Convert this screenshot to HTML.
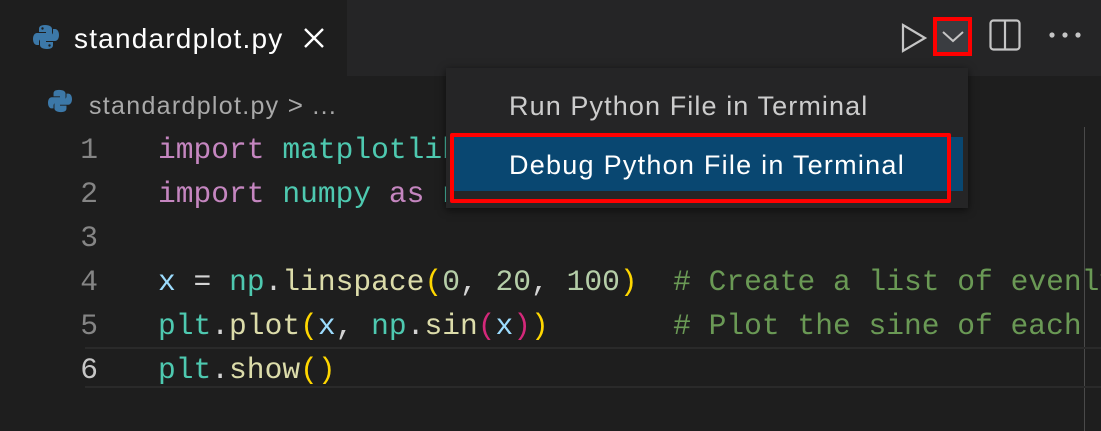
<!DOCTYPE html>
<html><head><style>
*{margin:0;padding:0;box-sizing:border-box}
body{width:1101px;height:431px;background:#1e1e1e;overflow:hidden;position:relative;font-family:"Liberation Sans",sans-serif}
.abs{position:absolute}
.code{font-family:"Liberation Mono",monospace;font-size:29.6px;white-space:pre;line-height:44px}
.ln{color:#858585;text-align:right;width:38px;left:60px}
.k{color:#c586c0}.v{color:#9cdcfe}.c{color:#4ec9b0}.f{color:#dcdcaa}.n{color:#b5cea8}.y{color:#ffd700}.p{color:#da70d6}.m{color:#6a9955}.w{color:#d4d4d4}
</style></head><body>
<div class="abs" style="left:347px;top:0;width:754px;height:76px;background:#252526"></div>
<div class="abs" style="left:0;top:0;width:347px;height:76px;background:#1e1e1e"></div>
<svg class="abs" style="left:33px;top:24px" width="26" height="26" viewBox="0 0 26 26"><path d="M12 1c-5 0-6 2-6 4v3h7v1H4c-2 0-4 2-4 6s2 6 4 6h2v-3c0-2 2-4 4-4h6c2 0 3-1 3-3V5c0-2-2-4-7-4z" fill="#3c78a8"/><path d="M14 25c5 0 6-2 6-4v-3h-7v-1h9c2 0 4-2 4-6s-2-6-4-6h-2v3c0 2-2 4-4 4h-6c-2 0-3 1-3 3v6c0 2 2 4 7 4z" fill="#3c78a8"/><circle cx="9.5" cy="4.5" r="1.2" fill="#1e1e1e"/><circle cx="16.5" cy="21.5" r="1.2" fill="#1e1e1e"/></svg>
<div class="abs" style="left:74px;top:23px;font-size:28px;letter-spacing:1.2px;color:#fff">standardplot.py</div>
<svg class="abs" style="left:303px;top:27px" width="22" height="22"><path d="M2 2L20 20M20 2L2 20" stroke="#fff" stroke-width="2.4"/></svg>
<svg class="abs" style="left:900px;top:22px" width="28" height="32"><path d="M3 3L25 16L3 29Z" fill="none" stroke="#c5c5c5" stroke-width="2.2"/></svg>
<div class="abs" style="left:933px;top:17px;width:39px;height:39px;background:#3a3d41;border:4px solid #f00"></div>
<svg class="abs" style="left:941px;top:28px" width="24" height="16"><path d="M2 4L12 13L22 4" fill="none" stroke="#c5c5c5" stroke-width="2"/></svg>
<svg class="abs" style="left:989px;top:19px" width="32" height="32"><rect x="1.5" y="1.5" width="29" height="29" rx="3" fill="none" stroke="#c5c5c5" stroke-width="2.2"/><path d="M16 2V30" stroke="#c5c5c5" stroke-width="2.2"/></svg>
<svg class="abs" style="left:1047px;top:30px" width="36" height="10"><circle cx="5" cy="5" r="2.6" fill="#c5c5c5"/><circle cx="18" cy="5" r="2.6" fill="#c5c5c5"/><circle cx="31" cy="5" r="2.6" fill="#c5c5c5"/></svg>
<svg class="abs" style="left:48px;top:89px" width="24" height="24" viewBox="0 0 26 26"><path d="M12 1c-5 0-6 2-6 4v3h7v1H4c-2 0-4 2-4 6s2 6 4 6h2v-3c0-2 2-4 4-4h6c2 0 3-1 3-3V5c0-2-2-4-7-4z" fill="#3c78a8"/><path d="M14 25c5 0 6-2 6-4v-3h-7v-1h9c2 0 4-2 4-6s-2-6-4-6h-2v3c0 2-2 4-4 4h-6c-2 0-3 1-3 3v6c0 2 2 4 7 4z" fill="#3c78a8"/></svg>
<div class="abs" style="left:89px;top:90px;font-size:25px;letter-spacing:1.3px;color:#a9a9a9;white-space:pre">standardplot.py <span style="font-size:26px">&gt;</span> ...</div>
<div class="abs" style="left:1084px;top:127px;width:1px;height:304px;background:#4a4a4a"></div>
<div class="abs" style="left:85px;top:347px;width:1016px;height:41px;border-top:2px solid #2a2a2a;border-bottom:2px solid #2a2a2a"></div>
<div class="abs code ln" style="top:128px">1
2
3
4
5
<span style="color:#c6c6c6">6</span></div>
<div class="abs code" style="left:158px;top:128px"><span class="k">import</span> <span class="c">matplotlib</span>
<span class="k">import</span> <span class="c">numpy</span> <span class="k">as</span> <span class="c">np</span>

<span class="v">x</span> <span class="w">=</span> <span class="c">np</span><span class="w">.</span><span class="f">linspace</span><span class="y">(</span><span class="n">0</span><span class="w">, </span><span class="n">20</span><span class="w">, </span><span class="n">100</span><span class="y">)</span>  <span class="m"># Create a list of evenly</span>
<span class="c">plt</span><span class="w">.</span><span class="f">plot</span><span class="y">(</span><span class="v">x</span><span class="w">, </span><span class="c">np</span><span class="w">.</span><span class="f">sin</span><span style="color:#d4287a">(</span><span class="v">x</span><span style="color:#d4287a">)</span><span class="y">)</span>       <span class="m"># Plot the sine of each</span>
<span class="c">plt</span><span class="w">.</span><span class="f">show</span><span class="y">()</span></div>
<div class="abs" style="left:446px;top:68px;width:522px;height:140px;background:#252526;box-shadow:0 2px 8px rgba(0,0,0,.6)"></div>
<div class="abs" style="left:509px;top:91px;font-size:27px;letter-spacing:1.1px;color:#cccccc;white-space:nowrap">Run Python File in Terminal</div>
<div class="abs" style="left:450px;top:137px;width:513px;height:54px;background:#094771"></div>
<div class="abs" style="left:450px;top:133px;width:501px;height:70px;border:4px solid #f00;border-radius:2px"></div>
<div class="abs" style="left:509px;top:150px;font-size:27px;letter-spacing:1.25px;color:#fff;white-space:nowrap">Debug Python File in Terminal</div>
</body></html>
